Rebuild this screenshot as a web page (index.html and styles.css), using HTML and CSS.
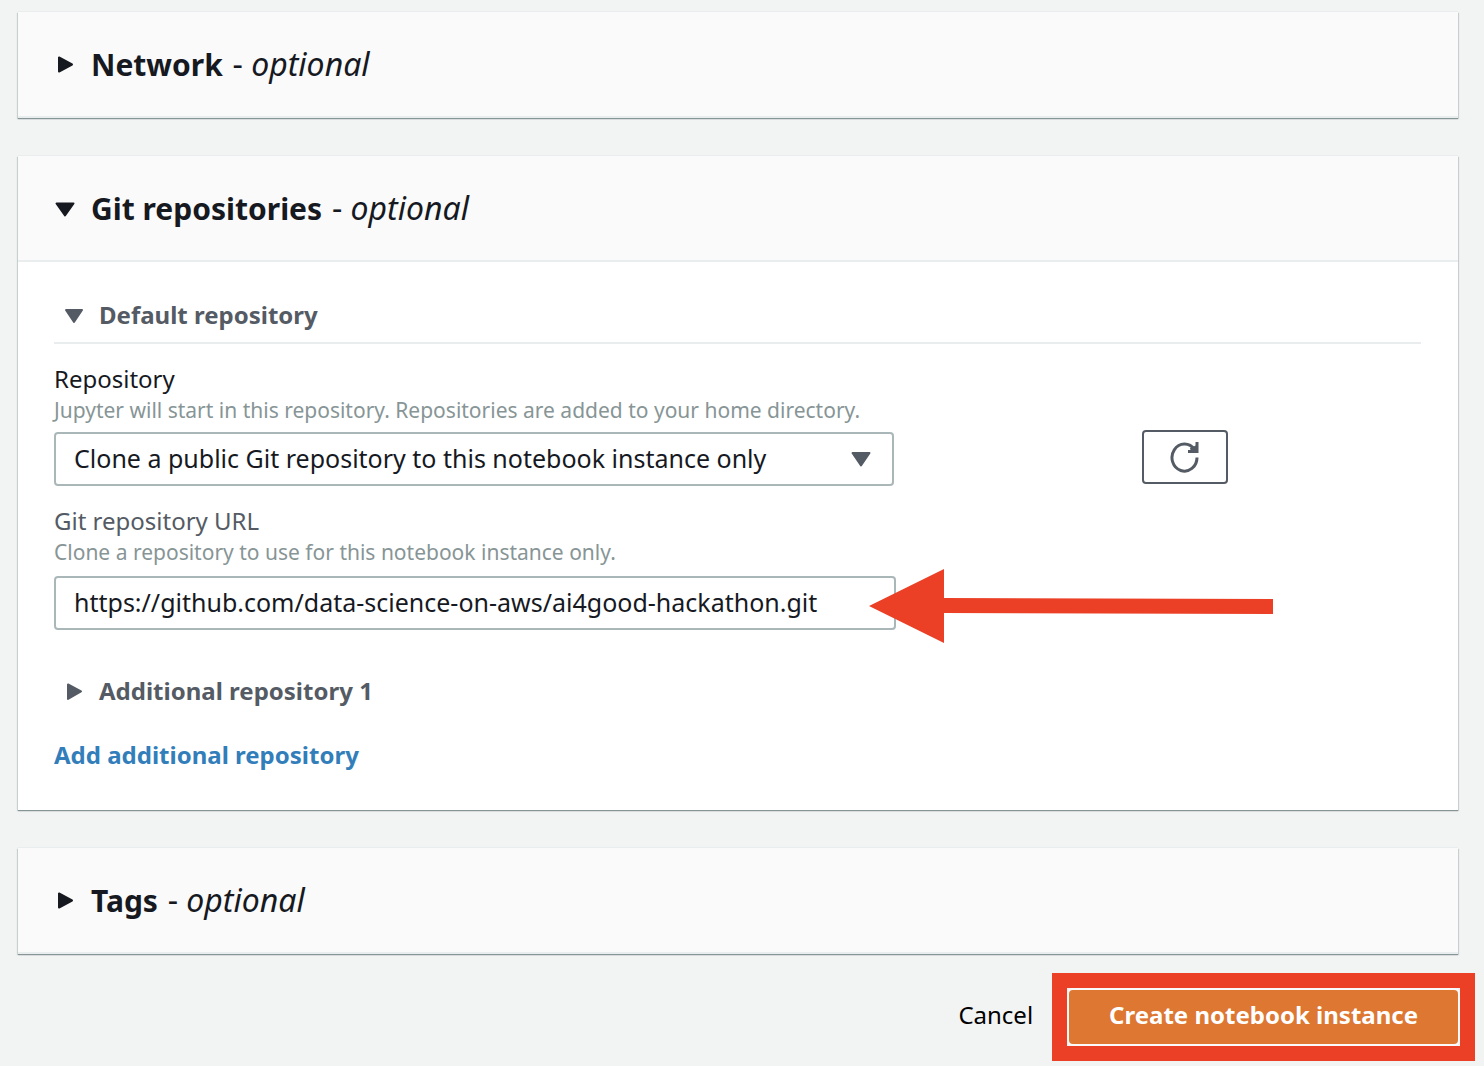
FILE: index.html
```html
<!DOCTYPE html>
<html lang="en">
<head>
<meta charset="utf-8">
<title>Create notebook instance</title>
<meta name="viewport" content="width=device-width, initial-scale=1">
<link rel="stylesheet" href="styles.css">
</head>
<body>
<main class="page">
  <details class="panel">
    <summary class="panel-header">
      <svg class="caret" viewBox="0 0 20 20" aria-hidden="true"><path d="M4 3.500V17.500L17 10.500Z"/></svg>
      <h2 class="panel-title">Network <span class="optional">- <em>optional</em></span></h2>
    </summary>
  </details>

  <details class="panel" open>
    <summary class="panel-header">
      <svg class="caret" viewBox="0 0 20 20" aria-hidden="true"><path d="M1.500 5.500H18.500L10 17.500Z"/></svg>
      <h2 class="panel-title">Git repositories <span class="optional">- <em>optional</em></span></h2>
    </summary>
    <div class="panel-body">
      <details class="repo" open>
        <summary class="repo-header ruled">
          <svg class="caret" viewBox="0 0 20 20" aria-hidden="true"><path d="M2 5H18L10 17Z"/></svg>
          <h3 class="repo-title">Default repository</h3>
        </summary>
        <div class="field-row">
          <div class="field">
            <label class="label" for="repository">Repository</label>
            <p class="hint" id="repository-hint">Jupyter will start in this repository. Repositories are added to your home directory.</p>
            <div class="control">
              <select class="input select" id="repository" aria-describedby="repository-hint">
                <option>Clone a public Git repository to this notebook instance only</option>
              </select>
              <svg class="caret select-caret" viewBox="0 0 20 20" aria-hidden="true"><path d="M1.500 4H18.500L10 16.500Z"/></svg>
            </div>
          </div>
          <button class="refresh" type="button" aria-label="Refresh repositories">
            <svg class="refresh-icon" viewBox="0 0 32 32" aria-hidden="true"><path d="M28 16.500A12.500 13.500 0 1 1 25.500 8.500"/><path d="M28 1V10.500H19"/><path class="fill" d="M21 7L28 4V11H22Z"/></svg>
          </button>
        </div>
        <div class="field url-field">
          <label class="label muted" for="url">Git repository URL</label>
          <p class="hint" id="url-hint">Clone a repository to use for this notebook instance only.</p>
          <div class="control url-control">
            <input class="input" id="url" type="text" value="https://github.com/data-science-on-aws/ai4good-hackathon.git" aria-describedby="url-hint">
            <svg class="arrow" viewBox="0 0 404 74" aria-hidden="true"><path d="M0 37L75 0V29L404 30V45L75 44V74Z"/></svg>
          </div>
        </div>
      </details>
      <details class="repo additional">
        <summary class="repo-header">
          <svg class="caret" viewBox="0 0 20 20" aria-hidden="true"><path d="M4 3.500V18L17 10.500Z"/></svg>
          <h3 class="repo-title">Additional repository 1</h3>
        </summary>
      </details>
      <a class="add-link" href="#">Add additional repository</a>
    </div>
  </details>

  <details class="panel">
    <summary class="panel-header">
      <svg class="caret" viewBox="0 0 20 20" aria-hidden="true"><path d="M4 3.500V17.500L17 10.500Z"/></svg>
      <h2 class="panel-title">Tags <span class="optional">- <em>optional</em></span></h2>
    </summary>
  </details>

  <footer class="actions">
    <a class="cancel" href="#">Cancel</a>
    <div class="highlight">
      <button class="primary" type="submit">Create notebook instance</button>
    </div>
  </footer>
</main>
</body>
</html>
```
FILE: styles.css
```css
* {
  box-sizing: border-box;
}

body {
  margin: 0;
  background: #f2f3f3;
  color: #16191f;
  font-family: "Noto Sans", "Open Sans", sans-serif;
  font-size: 24px;
  line-height: 32px;
}

h2,
h3,
p {
  margin: 0;
}

.page {
  display: flex;
  flex-direction: column;
  gap: 38px;
  padding: 12px 26px 22px 18px;
}

.panel {
  background: #fff;
  box-shadow: 0 1px 1px 0 #879596, 1px 1px 1px 0 #d5dbdb, -1px 1px 1px 0 #d5dbdb, 0 -1px 0 0 #eaeded;
}

summary {
  display: flex;
  align-items: center;
  list-style: none;
  cursor: pointer;
}

.panel-header {
  gap: 16px;
  height: 106px;
  padding: 0 37px;
  border-bottom: 2px solid #eaeded;
  background: #fafafa;
}

.panel-title {
  font-size: 30px;
  line-height: 40px;
  font-weight: 700;
}

.optional {
  margin-left: 2px;
  font-size: 32px;
  font-weight: 400;
}

.caret {
  flex: none;
  width: 20px;
  height: 20px;
  fill: currentColor;
  stroke: currentColor;
  stroke-width: 2;
  stroke-linejoin: round;
}

.panel-body {
  padding: 37px 37px 39px 36px;
}

.repo-header {
  gap: 15px;
  padding-left: 10px;
  color: #545b64;
}

.ruled {
  padding-bottom: 11px;
  border-bottom: 2px solid #eaeded;
}

.repo-title {
  font-size: 24px;
  line-height: 32px;
  font-weight: 700;
}

.field-row {
  display: flex;
  align-items: flex-end;
  gap: 248px;
  padding-top: 19px;
}

.field {
  flex: 0 1 840px;
  min-width: 0;
}

.label {
  display: block;
}

.muted {
  color: #545b64;
}

.hint {
  color: #879596;
  font-size: 21px;
  line-height: 30px;
}

.control {
  position: relative;
  margin-top: 7px;
}

.url-field {
  max-width: 842px;
  padding-top: 19px;
}

.url-control {
  margin-top: 9px;
}

.input {
  display: block;
  width: 100%;
  height: 54px;
  padding: 0 18px 2px;
  border: 2px solid #aab7b8;
  border-radius: 4px;
  background: #fff;
  color: inherit;
  font: inherit;
  font-size: 25px;
}

.select {
  appearance: none;
}

.select-caret {
  position: absolute;
  top: 17px;
  right: 23px;
  color: #545b64;
  pointer-events: none;
}

.refresh {
  display: flex;
  flex: none;
  align-items: center;
  justify-content: center;
  width: 86px;
  height: 54px;
  margin-bottom: 2px;
  padding: 0;
  border: 2px solid #545b64;
  border-radius: 4px;
  background: #fff;
  color: #545b64;
}

.refresh-icon {
  width: 32px;
  height: 32px;
  fill: none;
  stroke: currentColor;
  stroke-width: 3;
}

.refresh-icon .fill {
  fill: currentColor;
  stroke: none;
}

.arrow {
  position: absolute;
  top: -7px;
  left: calc(100% - 27px);
  width: 404px;
  height: 74px;
  fill: #eb4026;
  pointer-events: none;
}

.additional {
  padding-top: 45px;
}

.add-link {
  display: inline-block;
  margin-top: 32px;
  color: #327eba;
  font-weight: 700;
  text-decoration: none;
}

.actions {
  display: flex;
  align-items: center;
  justify-content: flex-end;
  gap: 36px;
  margin-top: -2px;
}

.cancel {
  padding-bottom: 4px;
  color: #000;
  text-decoration: none;
}

.highlight {
  position: relative;
}

.highlight::after {
  content: "";
  position: absolute;
  inset: -17px;
  border: 15px solid #eb4026;
  pointer-events: none;
}

.primary {
  display: block;
  height: 54px;
  padding: 0 40px 4px;
  border: 0;
  border-radius: 4px;
  background: #dd7732;
  box-shadow: 0 0 0 2px #fafafa;
  color: #fff;
  font: inherit;
  font-weight: 700;
}
```
